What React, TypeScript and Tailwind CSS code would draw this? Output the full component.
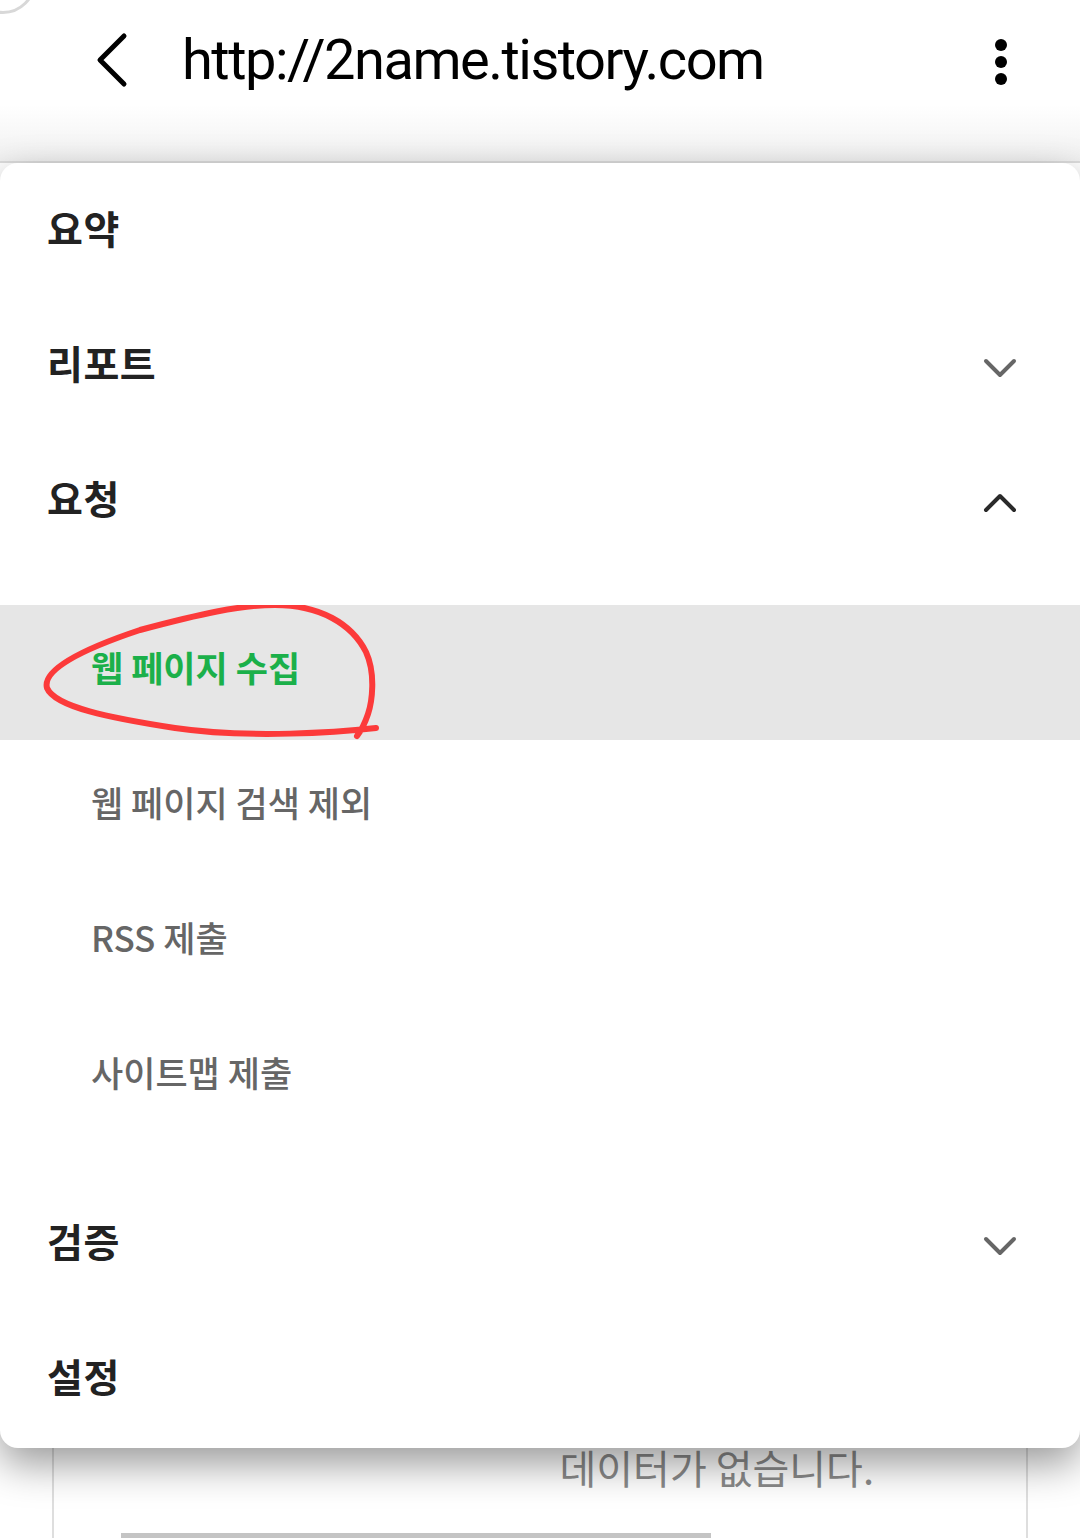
import React from "react";

const kr = { fontFamily: '"Noto Sans CJK KR", "Noto Sans", sans-serif' };

function ChevronDown({ className }: { className?: string }) {
  return (
    <svg width="36" height="24" viewBox="0 0 36 24" className={className} fill="none">
      <path d="M4 5 L18 19 L32 5" stroke="currentColor" strokeWidth="4" strokeLinecap="round" strokeLinejoin="round" />
    </svg>
  );
}
function ChevronUp({ className }: { className?: string }) {
  return (
    <svg width="36" height="24" viewBox="0 0 36 24" className={className} fill="none">
      <path d="M4 19 L18 5 L32 19" stroke="currentColor" strokeWidth="4" strokeLinecap="round" strokeLinejoin="round" />
    </svg>
  );
}

function TopRow({ label, icon }: { label: string; icon?: React.ReactNode }) {
  return (
    <div className="h-[135px] flex items-center justify-between pl-[47px] pr-[62px]">
      <span className="text-[39px] font-bold text-[#222] tracking-[0.5px] mb-[10px]" style={kr}>{label}</span>
      {icon}
    </div>
  );
}

function SubRow({ label, active }: { label: string; active?: boolean }) {
  return (
    <div className={`h-[135px] flex items-center pl-[91px] ${active ? "bg-[#e6e6e6]" : ""}`}>
      <span
        className={`text-[35px] mb-[10px] ${active ? "font-bold text-[#1bb04a]" : "font-medium text-[#666]"}`}
        style={kr}
      >
        {label}
      </span>
    </div>
  );
}

export default function App() {
  return (
    <div className="relative w-[1080px] h-[1538px] overflow-hidden bg-white">
      {/* faint circle top-left */}
      <div className="absolute -left-[30px] -top-[52px] w-[66px] h-[66px] rounded-full border-[3px] border-[#d8d8d8]" />

      {/* header */}
      <div className="h-[163px] bg-gradient-to-b from-white from-[65%] to-[#f1f1f1] border-b-2 border-[#dcdcdc]">
        <div className="h-[120px] flex items-center pl-[94px] pr-[73px]">
          <svg width="36" height="56" viewBox="0 0 36 56" fill="none" className="shrink-0">
            <path d="M30 4 L6 28 L30 52" stroke="#000" strokeWidth="5" strokeLinecap="round" strokeLinejoin="round" />
          </svg>
          <span
            className="ml-[52px] text-[56px] text-black tracking-[-1.5px] leading-none"
            style={{ fontFamily: 'Roboto, "Noto Sans", sans-serif' }}
          >
            http://2name.tistory.com
          </span>
          <div className="ml-auto flex flex-col items-center gap-[5px] pt-[4px]">
            <span className="w-[12px] h-[12px] rounded-full bg-black" />
            <span className="w-[12px] h-[12px] rounded-full bg-black" />
            <span className="w-[12px] h-[12px] rounded-full bg-black" />
          </div>
        </div>
      </div>

      {/* underlying page content */}
      <div className="mx-[52px] h-[1400px] border-x-2 border-[#dedede] flex flex-col">
        <div className="h-[1284px] shrink-0" />
        <div className="flex justify-end pr-[152px]">
          <span className="text-[40px] text-[#8a8a8a] leading-none" style={kr}>데이터가 없습니다.</span>
        </div>
        <div className="h-[46px] shrink-0" />
        <div className="ml-[67px] w-[590px] h-[6px] bg-[#c4c4c4] shrink-0" />
      </div>

      {/* dropdown menu overlay */}
      <div className="absolute left-0 right-0 top-[163px] bg-white rounded-[18px] shadow-[0_16px_40px_rgba(0,0,0,0.4)]">
        <div className="pt-[2px]">
          <TopRow label="요약" />
          <TopRow label="리포트" icon={<ChevronDown className="text-[#666]" />} />
          <TopRow label="요청" icon={<ChevronUp className="text-[#2a2a2a]" />} />
        </div>
        <div className="pt-[35px] pb-[33px]">
          <div className="relative">
            <SubRow label="웹 페이지 수집" active />
            <svg className="absolute left-0 top-0 pointer-events-none" width="400" height="140" viewBox="0 603 400 140" fill="none">
              <path
                d="M376 726 C340 730 250 737 175 726 C110 716 55 705 47 686 C42 668 80 648 140 628 C200 612 240 603 275 603 C320 603 352 622 366 650 C376 672 372 700 368 712 C364 724 360 730 357 734"
                stroke="#fc3a3a"
                strokeWidth="6"
                strokeLinecap="round"
                strokeLinejoin="round"
              />
            </svg>
          </div>
          <SubRow label="웹 페이지 검색 제외" />
          <SubRow label="RSS 제출" />
          <SubRow label="사이트맵 제출" />
        </div>
        <TopRow label="검증" icon={<ChevronDown className="text-[#666]" />} />
        <TopRow label="설정" />
      </div>
    </div>
  );
}
